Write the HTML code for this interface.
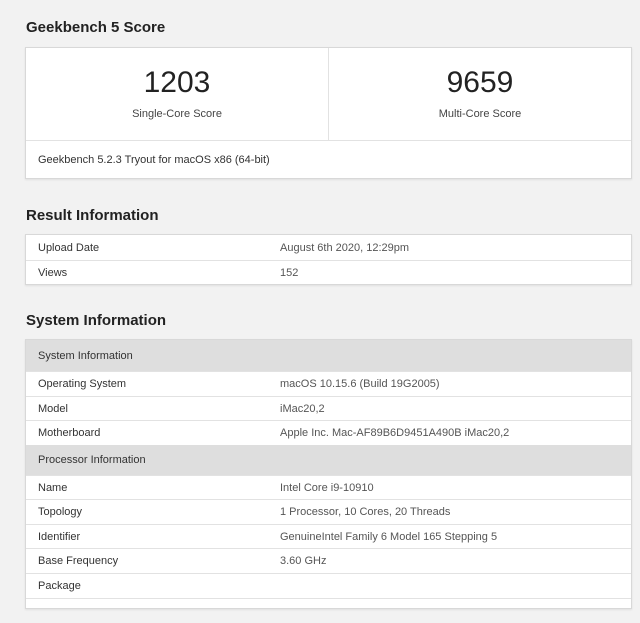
<!DOCTYPE html>
<html><head><style>
*{margin:0;padding:0;box-sizing:border-box}
body{width:640px;height:600px;background:#f2f2f2;font-family:"Liberation Sans",sans-serif;color:#222;position:relative;overflow:hidden}
.h{position:absolute;left:26px;font-size:15px;font-weight:bold;color:#222}
.card{position:absolute;left:25px;width:607px;background:#fff;border:1px solid #d8d8d8;box-shadow:0 1px 2px rgba(0,0,0,.08)}
.r{position:absolute;left:0;right:0;border-top:1px solid #e2e2e2;font-size:11px}
.r span{position:absolute;top:50%;transform:translateY(-50%)}
.l{left:12px;color:#333}.v{left:254px;color:#555}
.g{background:#dedede;border-top:none}
</style></head><body>
<div class="h" style="top:19px">Geekbench 5 Score</div>
<div class="card" style="top:47px;height:132px">
 <div style="position:absolute;left:302px;top:0;height:92px;border-left:1px solid #e2e2e2"></div>
 <div style="position:absolute;left:0;width:302px;top:18px;text-align:center;font-size:30px;color:#222">1203</div>
 <div style="position:absolute;left:0;width:302px;top:60px;text-align:center;font-size:11px;color:#444">Single-Core Score</div>
 <div style="position:absolute;left:303px;right:0;top:18px;text-align:center;font-size:30px;color:#222">9659</div>
 <div style="position:absolute;left:303px;right:0;top:60px;text-align:center;font-size:11px;color:#444">Multi-Core Score</div>
 <div class="r" style="top:92px;height:39px"><span class="l">Geekbench 5.2.3 Tryout for macOS x86 (64-bit)</span></div>
</div>
<div class="h" style="top:207px">Result Information</div>
<div class="card" style="top:234px;height:51px">
 <div class="r" style="top:0;height:25px;border-top:none"><span class="l">Upload Date</span><span class="v">August 6th 2020, 12:29pm</span></div>
 <div class="r" style="top:25px;height:25px"><span class="l">Views</span><span class="v">152</span></div>
</div>
<div class="h" style="top:312px">System Information</div>
<div class="card" style="top:339px;height:270px">
 <div class="r g" style="top:0;height:31px"><span class="l">System Information</span></div>
 <div class="r" style="top:31px;height:25px"><span class="l">Operating System</span><span class="v">macOS 10.15.6 (Build 19G2005)</span></div>
 <div class="r" style="top:56px;height:24px"><span class="l">Model</span><span class="v">iMac20,2</span></div>
 <div class="r" style="top:80px;height:25px"><span class="l">Motherboard</span><span class="v">Apple Inc. Mac-AF89B6D9451A490B iMac20,2</span></div>
 <div class="r g" style="top:105px;height:30px"><span class="l">Processor Information</span></div>
 <div class="r" style="top:135px;height:24px"><span class="l">Name</span><span class="v">Intel Core i9-10910</span></div>
 <div class="r" style="top:159px;height:25px"><span class="l">Topology</span><span class="v">1 Processor, 10 Cores, 20 Threads</span></div>
 <div class="r" style="top:184px;height:24px"><span class="l">Identifier</span><span class="v">GenuineIntel Family 6 Model 165 Stepping 5</span></div>
 <div class="r" style="top:208px;height:25px"><span class="l">Base Frequency</span><span class="v">3.60 GHz</span></div>
 <div class="r" style="top:233px;height:25px"><span class="l">Package</span></div>
 <div class="r" style="top:258px;height:25px"></div>
</div>
</body></html>
